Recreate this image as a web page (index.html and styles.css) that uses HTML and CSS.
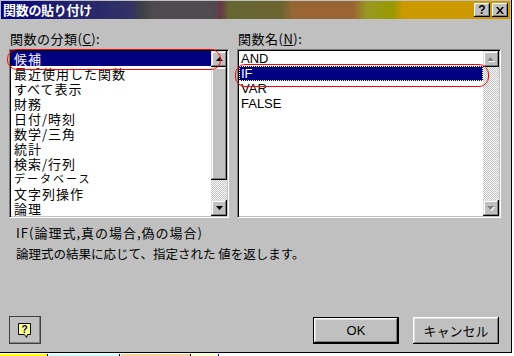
FILE: index.html
```html
<!DOCTYPE html>
<html lang="ja">
<head>
  <meta charset="UTF-8">
  <title>関数の貼り付け</title>
  <link rel="stylesheet" href="styles.css">
</head>
<body>
  <div class="dialog">
    <div class="titlebar">
      <span class="title">関数の貼り付け</span>
      <div class="caption-btns">
        <span class="cap-btn">?</span>
        <span class="cap-btn">
          <svg width="8" height="7" viewBox="0 0 8 7"><path d="M0 0h2l2 2.5L6 0h2L5 3.5 8 7H6L4 4.5 2 7H0l3-3.5z" fill="#000"/></svg>
        </span>
      </div>
    </div>

    <div class="content">
      <div class="lists">
        <div class="group">
          <div class="label">関数の分類(<u>C</u>):</div>
          <div class="listbox">
            <ul class="items">
              <li class="selected">候補</li>
              <li>最近使用した関数</li>
              <li>すべて表示</li>
              <li>財務</li>
              <li>日付/時刻</li>
              <li>数学/三角</li>
              <li>統計</li>
              <li>検索/行列</li>
              <li class="small">データベース</li>
              <li>文字列操作</li>
              <li>論理</li>
            </ul>
            <div class="scrollbar">
              <div class="sb-btn"><svg width="7" height="4" viewBox="0 0 7 4"><path d="M3.5 0L7 4H0z" fill="#000"/></svg></div>
              <div class="sb-thumb"></div>
              <div class="sb-track"></div>
              <div class="sb-btn"><svg width="7" height="4" viewBox="0 0 7 4"><path d="M0 0h7L3.5 4z" fill="#000"/></svg></div>
            </div>
            <div class="mark mark-cat"></div>
          </div>
        </div>

        <div class="group">
          <div class="label">関数名(<u>N</u>):</div>
          <div class="listbox">
            <ul class="items latin">
              <li>AND</li>
              <li class="selected focus">IF</li>
              <li>VAR</li>
              <li>FALSE</li>
            </ul>
            <div class="scrollbar">
              <div class="sb-btn"><svg width="8" height="5" viewBox="0 0 8 5"><path d="M4.5 1L8 5H1z" fill="#fff"/><path d="M3.5 0L7 4H0z" fill="#808080"/></svg></div>
              <div class="sb-track"></div>
              <div class="sb-btn"><svg width="8" height="5" viewBox="0 0 8 5"><path d="M1 1h7L4.5 5z" fill="#fff"/><path d="M0 0h7L3.5 4z" fill="#808080"/></svg></div>
            </div>
            <div class="mark mark-name"></div>
          </div>
        </div>
      </div>

      <div class="syntax">IF(論理式,真の場合,偽の場合)</div>
      <div class="desc">論理式の結果に応じて、指定された 値を返します。</div>

      <div class="footer">
        <div class="btn help">
          <svg width="14" height="16" viewBox="0 0 14 16">
            <path d="M0.5 0.5h12v11h-3l-1 3-2-3h-6z" fill="#ffff80" stroke="#000"/>
            <text x="6.5" y="10" text-anchor="middle" font-family="Liberation Sans, sans-serif" font-weight="bold" font-size="10" fill="#000080">?</text>
          </svg>
        </div>
        <div class="spacer"></div>
        <div class="btn default">OK</div>
        <div class="btn">キャンセル</div>
      </div>
    </div>
  </div>

  <div class="sheet">
    <span class="cell yellow"></span>
    <span class="cell cyan"></span>
    <span class="cell salmon"></span>
    <span class="cell cream"></span>
  </div>
</body>
</html>
```

FILE: styles.css
```css
body {
  margin: 0;
  background: #fff;
  font-family: "Noto Sans CJK JP", sans-serif;
  color: #000;
}
.dialog {
  width: 512px;
  height: 353px;
  box-sizing: border-box;
  background: #c0c0c0;
  border-right: 1px solid #000;
  border-bottom: 1px solid #000;
  display: flex;
  flex-direction: column;
}
.titlebar {
  height: 18px;
  margin: 1px 1px 0 1px;
  display: flex;
  align-items: center;
  justify-content: space-between;
  background: linear-gradient(to right,
    #000080 0, #1c1c70 50px, #333366 130px, #3e4242 142px,
    #4f4b50 152px, #4f4b50 212px, #663a44 220px, #666633 228px,
    #6a6530 280px, #996633 292px, #996633 352px, #999922 366px,
    #999900 392px, #cc9900 402px, #cc9900 100%);
}
.title {
  color: #fff;
  font-weight: bold;
  font-size: 13px;
  line-height: 16px;
  padding-left: 2px;
  letter-spacing: -0.3px;
}
.caption-btns {
  display: flex;
  gap: 2px;
  padding-right: 2px;
}
.cap-btn {
  width: 16px;
  height: 14px;
  box-sizing: border-box;
  background: #c0c0c0;
  box-shadow: inset -1px -1px #000, inset 1px 1px #fff, inset -2px -2px #808080;
  display: flex;
  align-items: center;
  justify-content: center;
  font-family: "Liberation Sans", sans-serif;
  font-weight: bold;
  font-size: 12px;
  line-height: 14px;
}
.content {
  padding: 12px 0 0 9px;
  display: flex;
  flex-direction: column;
}
.lists {
  display: grid;
  grid-template-columns: 220px 264px;
  column-gap: 8px;
}
.label {
  font-size: 13px;
  letter-spacing: 0.5px;
  line-height: 16px;
  height: 16px;
  margin-bottom: 2px;
  padding-left: 1px;
}
.listbox {
  position: relative;
  height: 169px;
  box-sizing: border-box;
  background: #fff;
  border: 1px solid;
  border-color: #808080 #fff #fff #808080;
  box-shadow: inset 1px 1px 0 #000, inset -1px -1px 0 #c0c0c0;
  padding: 1px;
  display: flex;
}
.items {
  list-style: none;
  margin: 0;
  padding: 0;
  flex: 1;
  font-size: 13px;
  letter-spacing: 1px;
}
.items li {
  height: 15px;
  line-height: 15px;
  padding-left: 3px;
  white-space: nowrap;
}
.items li.small {
  font-size: 11px;
  letter-spacing: 2px;
}
.items li.selected {
  background: #000080;
  color: #fff;
}
.items.latin {
  font-family: "Liberation Sans", sans-serif;
  font-size: 13px;
  letter-spacing: 0;
}
.items.latin li {
  padding-left: 2px;
}
.items li.focus {
  outline: 1px dotted #ffff80;
  outline-offset: -1px;
}
.scrollbar {
  width: 16px;
  display: flex;
  flex-direction: column;
}
.sb-btn,
.sb-thumb {
  background: #c0c0c0;
  box-shadow: inset -1px -1px #000, inset 1px 1px #dfdfdf, inset -2px -2px #808080, inset 2px 2px #fff;
}
.sb-btn {
  height: 16px;
  display: flex;
  align-items: center;
  justify-content: center;
}
.sb-thumb {
  height: 113px;
}
.sb-track {
  flex: 1;
  background-image: conic-gradient(#fff 25%, #c0c0c0 0 50%, #fff 0 75%, #c0c0c0 0);
  background-size: 2px 2px;
}
.mark {
  position: absolute;
  border: 1px solid #ff0000;
  border-radius: 10px;
  pointer-events: none;
}
.mark-cat {
  left: -3px;
  top: -1px;
  width: 212px;
  height: 19px;
}
.mark-name {
  left: -3px;
  top: 14px;
  width: 252px;
  height: 21px;
}
.syntax {
  margin-top: 7px;
  padding-left: 7px;
  font-size: 13px;
  letter-spacing: 1px;
  line-height: 16px;
}
.desc {
  margin-top: 5px;
  padding-left: 7px;
  font-size: 12.5px;
  line-height: 16px;
}
.footer {
  margin-top: 54px;
  display: flex;
  align-items: center;
  gap: 14px;
  padding-right: 12px;
}
.spacer {
  flex: 1;
}
.btn {
  width: 86px;
  height: 27px;
  box-sizing: border-box;
  background: #c0c0c0;
  box-shadow: inset -1px -1px #000, inset 1px 1px #fff, inset -2px -2px #808080, inset 2px 2px #dfdfdf;
  display: flex;
  align-items: center;
  justify-content: center;
  font-size: 13px;
}
.btn.default {
  border: 1px solid #000;
  font-family: "Liberation Sans", sans-serif;
}
.btn.help {
  width: 32px;
  height: 28px;
  box-shadow: inset 0 0 0 1px #404040, inset 1px 1px #fff, inset -2px -2px #808080;
  padding-top: 1px;
}
.sheet {
  display: flex;
  height: 3px;
  margin-top: 1px;
}
.cell {
  height: 3px;
  border-right: 1px solid #000;
}
.cell.yellow { width: 47px; background: #ffff00; }
.cell.cyan { width: 70px; background: #ccffff; border-left: 1px solid #fff; }
.cell.salmon { width: 69px; background: #ffcc99; border-left: 1px solid #fff; }
.cell.cream { width: 27px; background: #ffffcc; border-color: #0000ff; }
```
